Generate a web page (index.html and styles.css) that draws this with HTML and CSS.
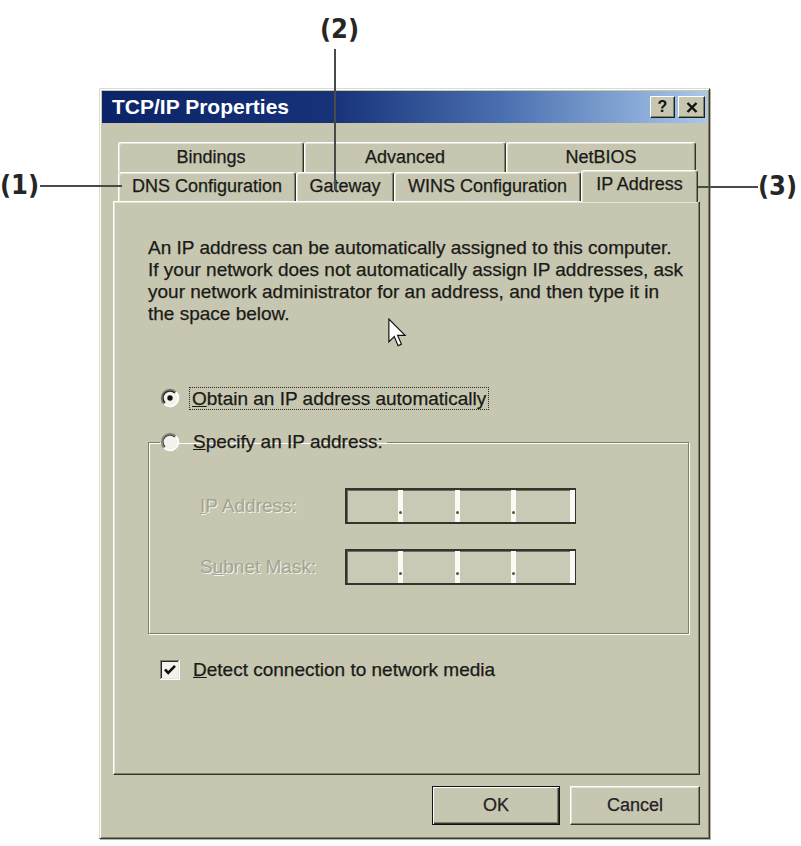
FILE: index.html
```html
<!DOCTYPE html>
<html lang="en">
<head>
<meta charset="utf-8">
<title>TCP/IP Properties</title>
<link rel="stylesheet" href="styles.css">
</head>
<body>
<div class="canvas">
  <span class="callout callout-1">(1)</span>
  <span class="leader leader-1"></span>
  <span class="callout callout-2">(2)</span>
  <span class="leader leader-2"></span>
  <span class="callout callout-3">(3)</span>
  <span class="leader leader-3"></span>

  <div class="dialog">
    <div class="titlebar">
      <span class="title">TCP/IP Properties</span>
      <div class="caption-buttons">
        <span class="cbtn cbtn-help">?</span>
        <span class="cbtn cbtn-close"><svg viewBox="0 0 12 11" width="12" height="11"><path d="M1.5 1 L10.5 10 M10.5 1 L1.5 10" stroke="#111" stroke-width="2.4" fill="none"/></svg></span>
      </div>
    </div>
    <div class="client">
      <div class="tabstrip">
        <div class="tabrow tabrow-back">
          <div class="tab w-bindings">Bindings</div>
          <div class="tab w-advanced">Advanced</div>
          <div class="tab w-netbios">NetBIOS</div>
        </div>
        <div class="tabrow tabrow-front">
          <div class="tab w-dns">DNS Configuration</div>
          <div class="tab w-gateway">Gateway</div>
          <div class="tab w-wins">WINS Configuration</div>
          <div class="tab tab-active w-ip">IP Address</div>
        </div>
      </div>
      <div class="panel">
        <p class="intro">An IP address can be automatically assigned to this computer.<br>If your network does not automatically assign IP addresses, ask<br>your network administrator for an address, and then type it in<br>the space below.</p>
        <div class="option option-auto">
          <svg class="radio" viewBox="0 0 20 20" width="20" height="20">
            <circle cx="10" cy="10" r="8.5" fill="#f3f3ec"/>
            <path d="M3.99 16.01 A8.5 8.5 0 0 1 16.01 3.99" fill="none" stroke="#77776a" stroke-width="1.6"/>
            <path d="M5.05 14.95 A7 7 0 0 1 14.95 5.05" fill="none" stroke="#26261f" stroke-width="1.5"/>
            <path d="M16.01 3.99 A8.5 8.5 0 0 1 3.99 16.01" fill="none" stroke="#ffffff" stroke-width="1.6"/>
            <circle cx="10" cy="10" r="2.7" fill="#111"/>
          </svg>
          <span class="focus"><u>O</u>btain an IP address automatically</span>
        </div>
        <fieldset class="group">
          <legend class="option option-legend">
            <svg class="radio" viewBox="0 0 20 20" width="20" height="20">
              <circle cx="10" cy="10" r="8.5" fill="#f3f3ec"/>
              <path d="M3.99 16.01 A8.5 8.5 0 0 1 16.01 3.99" fill="none" stroke="#8a8a7c" stroke-width="1.6"/>
              <path d="M5.05 14.95 A7 7 0 0 1 14.95 5.05" fill="none" stroke="#4a4a42" stroke-width="1.3"/>
              <path d="M16.01 3.99 A8.5 8.5 0 0 1 3.99 16.01" fill="none" stroke="#ffffff" stroke-width="1.6"/>
            </svg>
            <span class="label-text"><u>S</u>pecify an IP address:</span>
          </legend>
          <div class="field-row field-row-first">
            <span class="field-label"><u>I</u>P Address:</span>
            <div class="ipbox">
              <span class="oct oct-a"></span><span class="sep"></span>
              <span class="oct oct-b"></span><span class="sep"></span>
              <span class="oct oct-a"></span><span class="sep"></span>
              <span class="oct oct-c"></span><span class="sep sep-end"></span>
            </div>
          </div>
          <div class="field-row field-row-second">
            <span class="field-label">S<u>u</u>bnet Mask:</span>
            <div class="ipbox">
              <span class="oct oct-a"></span><span class="sep"></span>
              <span class="oct oct-b"></span><span class="sep"></span>
              <span class="oct oct-a"></span><span class="sep"></span>
              <span class="oct oct-c"></span><span class="sep sep-end"></span>
            </div>
          </div>
        </fieldset>
        <div class="option option-check">
          <svg class="checkbox" viewBox="0 0 20 20" width="20" height="20">
            <rect x="0" y="0" width="20" height="20" fill="#ffffff"/>
            <rect x="0" y="0" width="19" height="19" fill="#80806f"/>
            <rect x="1" y="1" width="18" height="18" fill="#e6e6da"/>
            <rect x="1" y="1" width="17" height="17" fill="#26261f"/>
            <rect x="2" y="2" width="16" height="16" fill="#f3f3ec"/>
            <polyline points="5,9.5 8.2,12.8 15,5.8" fill="none" stroke="#111" stroke-width="2.6"/>
          </svg>
          <span class="label-text"><u>D</u>etect connection to network media</span>
        </div>
      </div>
      <div class="buttons">
        <button class="btn btn-default">OK</button>
        <button class="btn btn-cancel">Cancel</button>
      </div>
    </div>
  </div>

  <svg class="cursor" viewBox="0 0 13 21" width="19" height="31">
    <path d="M0.6 0.6 L0.6 16.2 L4.3 12.6 L6.9 18.8 L9.2 17.8 L6.6 11.8 L11.7 11.8 Z" fill="#ffffff" stroke="#111" stroke-width="0.8" stroke-linejoin="miter"/>
  </svg>
</div>
</body>
</html>
```

FILE: styles.css
```css
* { box-sizing: border-box; }

body {
  margin: 0;
  background: #ffffff;
  font-family: "Liberation Sans", Arial, sans-serif;
  color: #1a1a16;
}

.canvas {
  position: relative;
  width: 801px;
  height: 846px;
  padding: 88px 0 0 99px;
  overflow: hidden;
}

/* callouts */
.callout {
  position: absolute;
  font-family: "DejaVu Sans Condensed", "DejaVu Sans", sans-serif;
  font-weight: bold;
  font-size: 27px;
  line-height: 1;
  color: #262626;
}
.callout-1 { left: 0; top: 171px; }
.callout-2 { left: 320px; top: 15px; }
.callout-3 { left: 758px; top: 172px; }

.leader { position: absolute; background: #4a4a4a; }
.leader-1 { left: 40px; top: 185px; width: 82px; height: 1.5px; }
.leader-3 { left: 688px; top: 186px; width: 70px; height: 1.5px; }
.leader-2 { left: 334px; top: 49px; width: 1.5px; height: 141px; }

/* dialog frame */
.dialog {
  width: 611px;
  height: 751px;
  background: #c6c6b1;
  border: 1px solid;
  border-color: #dcdccb #3a3a33 #3a3a33 #dcdccb;
  box-shadow: inset 1px 1px 0 #ffffff, inset -1px -1px 0 #80806f, 1px 1px 0 #b4b4a8;
  padding: 2px;
  display: flex;
  flex-direction: column;
}

.titlebar {
  height: 32px;
  display: flex;
  align-items: center;
  justify-content: space-between;
  padding: 0 2px 0 10px;
  background: linear-gradient(to right, #0b2469 0%, #173279 38%, #4a6fb0 66%, #a9c8ea 100%);
}
.title {
  color: #ffffff;
  font-weight: bold;
  font-size: 21px;
}
.caption-buttons { display: flex; gap: 3px; }
.cbtn {
  width: 25px;
  height: 22px;
  background: #c6c6b1;
  border: 1px solid;
  border-color: #ffffff #1e1e1a #1e1e1a #ffffff;
  box-shadow: inset -1px -1px 0 #80806f;
  display: flex;
  align-items: center;
  justify-content: center;
  font-weight: bold;
  font-size: 16px;
  color: #111;
}
.cbtn-close { width: 27px; }

.client {
  flex: 1;
  padding: 19px 7px 0 11px;
  display: flex;
  flex-direction: column;
}

/* tabs */
.tabstrip { padding-left: 5px; }
.tabrow { display: flex; }
.tabrow-back { height: 30px; }
.tabrow-front { height: 29px; }

.tab {
  height: 100%;
  display: flex;
  align-items: center;
  justify-content: center;
  font-size: 18px;
  -webkit-text-stroke: 0.25px #1a1a16;
  border-top: 1px solid #ffffff;
  border-left: 1px solid #ffffff;
  border-right: 1px solid #34342d;
  box-shadow: inset -1px 0 0 #80806f, inset 1px 1px 0 #e4e4d6;
  border-radius: 3px 3px 0 0;
  background: #c6c6b1;
  padding-bottom: 1px;
}
.w-bindings { width: 186px; }
.w-advanced { width: 202px; }
.w-netbios { width: 190px; }
.w-dns { width: 178px; }
.w-gateway { width: 98px; }
.w-wins { width: 187px; }
.w-ip { width: 117px; }

.tab-active {
  position: relative;
  z-index: 2;
  height: 32px;
  margin-top: -2px;
  padding-bottom: 4px;
}

/* panel */
.panel {
  height: 574px;
  border: 1px solid;
  border-color: #ffffff #34342d #34342d #ffffff;
  box-shadow: inset -1px -1px 0 #80806f, inset 1px 1px 0 #e4e4d6;
  padding: 35px 0 0 34px;
}

.intro {
  margin: 0;
  font-size: 19px;
  line-height: 22px;
  white-space: nowrap;
  -webkit-text-stroke: 0.25px #1a1a16;
}

.option {
  display: flex;
  align-items: center;
  height: 22px;
  font-size: 19px;
  white-space: nowrap;
  -webkit-text-stroke: 0.25px #1a1a16;
}
.option-auto { margin-top: 62px; padding-left: 12px; gap: 10px; }
.focus {
  outline: 1px dotted #2a2a24;
  padding: 0 2px;
  line-height: 21px;
}
.option-legend { margin-left: 11px; padding: 0 4px 0 0; gap: 13px; }
.option-check { margin-top: 25px; padding-left: 12px; gap: 13px; }

.group {
  margin: 22px 0 0 0;
  width: 541px;
  padding: 0 0 48px 0;
  border: 1px solid #80806f;
  box-shadow: 1px 1px 0 #ffffff, inset 1px 1px 0 #ffffff;
  min-inline-size: 0;
}

.field-row {
  display: flex;
  align-items: center;
  height: 36px;
  padding-left: 51px;
}
.field-row-first { margin-top: 35px; }
.field-row-second { margin-top: 25px; }

.field-label {
  width: 145px;
  font-size: 19px;
  color: #a3a392;
  text-shadow: 1px 1px 0 #f4f4ec;
  white-space: nowrap;
}

.ipbox {
  width: 231px;
  height: 36px;
  display: flex;
  border: 2px solid #34342d;
  border-right-width: 1px;
  box-shadow: inset 1px 1px 0 #6c6c5e;
  background: #c9c9b5;
}
.oct { height: 100%; }
.oct-a { width: 51px; }
.oct-b { width: 52px; }
.oct-c { width: 54px; }
.sep {
  width: 5px;
  height: 100%;
  background: #fbfbf6;
  position: relative;
}
.sep::after {
  content: "";
  position: absolute;
  left: 1px;
  top: 21px;
  width: 3px;
  height: 3px;
  border-radius: 50%;
  background: #55554a;
}
.sep-end::after { display: none; }

/* buttons */
.buttons {
  display: flex;
  justify-content: flex-end;
  gap: 10px;
  margin-top: 11px;
}
.btn {
  width: 130px;
  height: 39px;
  font-family: "Liberation Sans", Arial, sans-serif;
  font-size: 18px;
  color: #222;
  -webkit-text-stroke: 0.25px #222;
  background: #c6c6b1;
  border: 1px solid;
  border-color: #ffffff #34342d #34342d #ffffff;
  box-shadow: inset -1px -1px 0 #80806f, inset 1px 1px 0 #e4e4d6;
  padding: 0;
}
.btn-default {
  width: 128px;
  border: 1px solid #141412;
  box-shadow: inset 1px 1px 0 #ffffff, inset -1px -1px 0 #34342d, inset -2px -2px 0 #80806f;
}

/* mouse pointer overlay */
.cursor {
  position: absolute;
  left: 388px;
  top: 318px;
}
```
